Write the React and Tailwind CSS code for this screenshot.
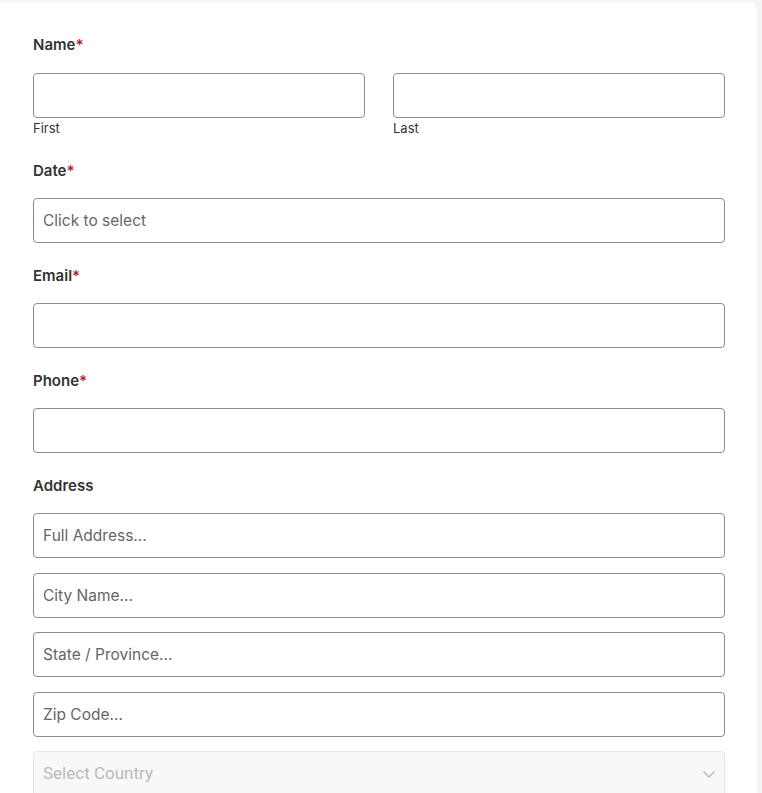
import React from "react";

function Label({ children, required, className = "" }) {
  return (
    <div className={"h-[22px] flex items-center text-[15px] font-semibold text-[#333] " + className}>
      {children}
      {required && <span className="text-[#b0252b]">*</span>}
    </div>
  );
}

function Input({ placeholder, className = "" }) {
  return (
    <div className={"h-[45px] w-full rounded-[4px] border border-[#8c8c8c] bg-white flex items-center px-[9px] text-[15.5px] text-[#666] " + className}>
      {placeholder}
    </div>
  );
}

export default function App() {
  return (
    <div className="min-h-[793px] bg-[#f4f4f4] pt-[2px] pr-[5px]" style={{ fontFamily: "Inter, 'Noto Sans', sans-serif" }}>
      <div className="bg-white rounded-tr-[6px] shadow-[0_0_2px_rgba(0,0,0,0.06)] h-[791px] overflow-hidden pl-[33px] pr-[32px] pt-[32px]">
        <Label required className="mb-[17px]">Name</Label>
        <div className="flex gap-[28px]">
          <div className="flex-1">
            <Input />
            <div className="text-[13px] text-[#333] mt-[1px] h-[18px] leading-[18px]">First</div>
          </div>
          <div className="flex-1">
            <Input />
            <div className="text-[13px] text-[#333] mt-[1px] h-[18px] leading-[18px]">Last</div>
          </div>
        </div>
        <Label required className="mt-[23px] mb-[16px]">Date</Label>
        <Input placeholder="Click to select" />
        <Label required className="mt-[22px] mb-[16px]">Email</Label>
        <Input />
        <Label required className="mt-[22px] mb-[16px]">Phone</Label>
        <Input />
        <Label className="mt-[22px] mb-[16px]">Address</Label>
        <div className="flex flex-col">
          <Input placeholder="Full Address..." />
          <Input placeholder="City Name..." className="mt-[15px]" />
          <Input placeholder="State / Province..." className="mt-[14px]" />
          <Input placeholder="Zip Code..." className="mt-[15px]" />
          <div className="mt-[14px] h-[45px] w-full rounded-[4px] border border-[#e6e6e6] bg-[#f8f8f8] flex items-center justify-between pl-[9px] pr-[8px] text-[17px] text-[#b8b8b8]" style={{ fontFamily: "Roboto, Inter, sans-serif" }}>
            <span>Select Country</span>
            <svg width="14" height="14" viewBox="0 0 14 14" fill="none" stroke="#b5b5b5" strokeWidth="1.3">
              <path d="M1.5 4.5 L7 10 L12.5 4.5" />
            </svg>
          </div>
        </div>
      </div>
    </div>
  );
}
